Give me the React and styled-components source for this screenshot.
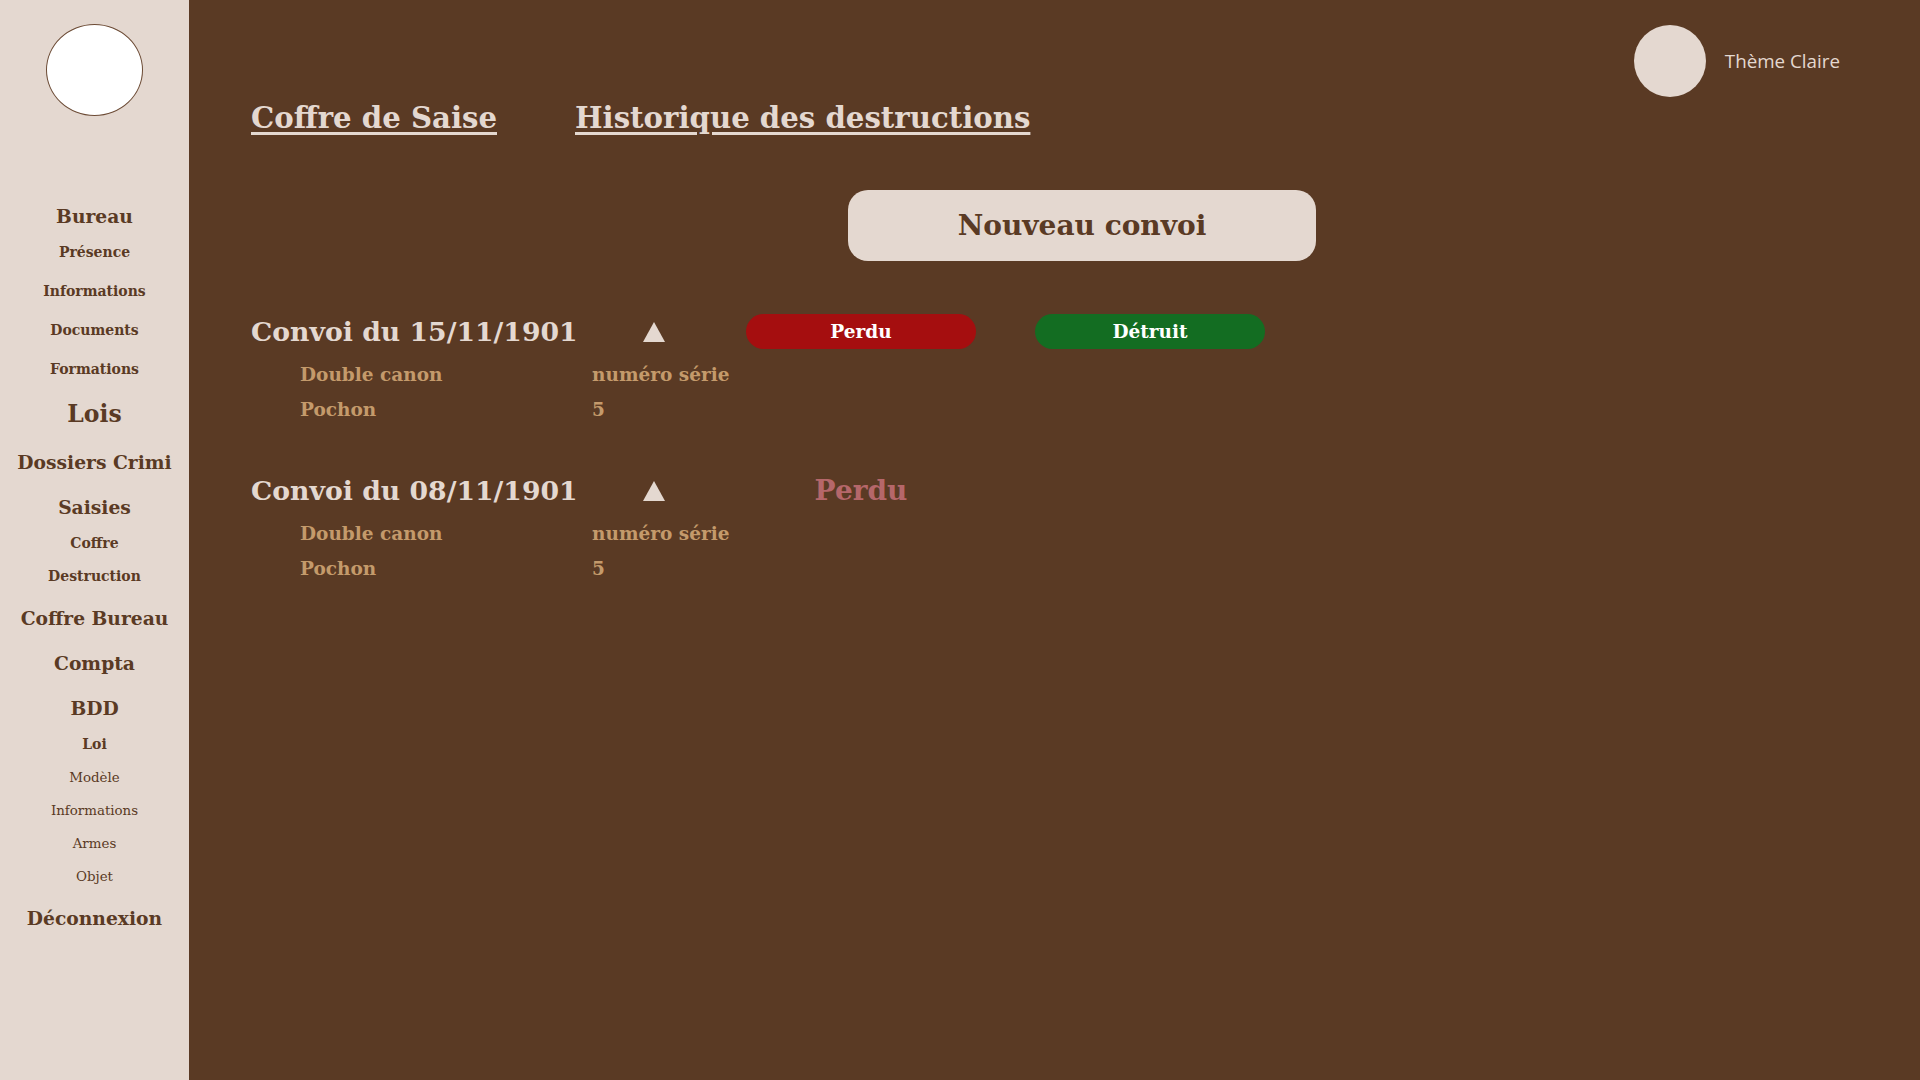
import React from "react";
import styled, { createGlobalStyle } from "styled-components";

const Global = createGlobalStyle`
  html, body {
    margin: 0;
    padding: 0;
    background: #5a3a24;
  }
  * {
    box-sizing: border-box;
  }
`;

const Page = styled.div`
  display: flex;
  width: 1920px;
  height: 1080px;
  overflow: hidden;
  font-family: "DejaVu Serif", "Liberation Serif", serif;
`;

const Sidebar = styled.nav`
  width: 189px;
  flex-shrink: 0;
  background: #e4d8d0;
  color: #5a3a24;
  display: flex;
  flex-direction: column;
  align-items: center;
  padding-top: 24px;
`;

const Logo = styled.div`
  width: 97px;
  height: 92px;
  border-radius: 50%;
  background: #ffffff;
  border: 1px solid #6b4a34;
  margin-bottom: 75px;
`;

const NavHeader = styled.div`
  font-weight: bold;
  font-size: ${(p) => (p.big ? "23.5px" : "18.7px")};
  line-height: ${(p) => (p.big ? "45px" : "39px")};
  height: ${(p) => (p.big ? "45px" : "39px")};
  margin-top: 6px;
  white-space: nowrap;
  text-align: center;
`;

const NavSub = styled.div`
  font-weight: ${(p) => (p.light ? "normal" : "bold")};
  font-size: ${(p) => (p.light ? "13.4px" : "14px")};
  line-height: 33px;
  height: 33px;
  margin-top: ${(p) => (p.spaced ? "6px" : "0")};
  white-space: nowrap;
  text-align: center;
`;

const Main = styled.main`
  flex: 1;
  display: flex;
  flex-direction: column;
  padding: 0 62px;
  color: #e4d8d0;
`;

const TopBar = styled.div`
  display: flex;
  justify-content: flex-end;
  align-items: center;
  gap: 19px;
  padding-top: 25px;
  padding-right: 18px;
`;

const ThemeDot = styled.div`
  width: 72px;
  height: 72px;
  border-radius: 50%;
  background: #e4d8d0;
`;

const ThemeLabel = styled.span`
  font-family: "Open Sans", "Noto Sans", sans-serif;
  font-size: 18.8px;
  color: #e4d8d0;
`;

const Tabs = styled.div`
  display: flex;
  gap: 78px;
  margin-top: 3px;
`;

const Tab = styled.a`
  font-size: 29.2px;
  font-weight: bold;
  line-height: 36px;
  color: #e4d8d0;
  text-decoration: underline;
  text-underline-offset: 4px;
  text-decoration-thickness: 2.5px;
`;

const NewButton = styled.button`
  align-self: flex-start;
  margin-left: 597px;
  margin-top: 54px;
  width: 468px;
  height: 71px;
  border: none;
  border-radius: 20px;
  background: #e4d8d0;
  color: #5a3a24;
  font-family: inherit;
  font-size: 28px;
  font-weight: bold;
`;

const ConvoyList = styled.div`
  display: flex;
  flex-direction: column;
  gap: 46px;
  margin-top: 53px;
`;

const Convoy = styled.section`
  display: flex;
  flex-direction: column;
`;

const ConvoyHead = styled.div`
  display: flex;
  align-items: center;
  height: 35px;
`;

const ConvoyTitle = styled.h2`
  margin: 0;
  width: 370px;
  flex-shrink: 0;
  font-size: 26.7px;
  font-weight: bold;
  white-space: nowrap;
  color: #e4d8d0;
`;

const Toggle = styled.div`
  width: 66px;
  display: flex;
  justify-content: center;
`;

const Status = styled.div`
  width: 230px;
  height: 35px;
  margin-left: 59px;
  display: flex;
  align-items: center;
  justify-content: center;
  border-radius: 18px;
  background: ${(p) => p.bg || "transparent"};
  color: ${(p) => p.color || "#ffffff"};
  font-size: ${(p) => (p.plain ? "28px" : "18.5px")};
  font-weight: bold;
`;

const Items = styled.div`
  display: grid;
  grid-template-columns: 292px auto;
  grid-auto-rows: 35px;
  align-items: center;
  padding-left: 49px;
  margin-top: 8px;
  color: #c49a6b;
  font-size: 18.5px;
  font-weight: bold;
`;

const Cell = styled.span`
  white-space: nowrap;
`;

function Triangle() {
  return (
    <svg width="22" height="20" viewBox="0 0 22 20">
      <polygon points="11,0 22,20 0,20" fill="#e4d8d0" />
    </svg>
  );
}

const convoys = [
  {
    date: "15/11/1901",
    items: [
      ["Double canon", "numéro série"],
      ["Pochon", "5"],
    ],
    actions: true,
  },
  {
    date: "08/11/1901",
    items: [
      ["Double canon", "numéro série"],
      ["Pochon", "5"],
    ],
    actions: false,
  },
];

export default function App() {
  return (
    <>
      <Global />
      <Page>
        <Sidebar>
          <Logo />
          <NavHeader>Bureau</NavHeader>
          <NavSub>Présence</NavSub>
          <NavSub spaced>Informations</NavSub>
          <NavSub spaced>Documents</NavSub>
          <NavSub spaced>Formations</NavSub>
          <NavHeader big>Lois</NavHeader>
          <NavHeader>Dossiers Crimi</NavHeader>
          <NavHeader>Saisies</NavHeader>
          <NavSub>Coffre</NavSub>
          <NavSub>Destruction</NavSub>
          <NavHeader>Coffre Bureau</NavHeader>
          <NavHeader>Compta</NavHeader>
          <NavHeader>BDD</NavHeader>
          <NavSub>Loi</NavSub>
          <NavSub light>Modèle</NavSub>
          <NavSub light>Informations</NavSub>
          <NavSub light>Armes</NavSub>
          <NavSub light>Objet</NavSub>
          <NavHeader>Déconnexion</NavHeader>
        </Sidebar>
        <Main>
          <TopBar>
            <ThemeDot />
            <ThemeLabel>Thème Claire</ThemeLabel>
          </TopBar>
          <Tabs>
            <Tab>Coffre de Saise</Tab>
            <Tab>Historique des destructions</Tab>
          </Tabs>
          <NewButton>Nouveau convoi</NewButton>
          <ConvoyList>
            {convoys.map((c) => (
              <Convoy key={c.date}>
                <ConvoyHead>
                  <ConvoyTitle>Convoi du {c.date}</ConvoyTitle>
                  <Toggle>
                    <Triangle />
                  </Toggle>
                  {c.actions ? (
                    <>
                      <Status bg="#a50e0f">Perdu</Status>
                      <Status bg="#136d22">Détruit</Status>
                    </>
                  ) : (
                    <Status plain color="#b5676a">
                      Perdu
                    </Status>
                  )}
                </ConvoyHead>
                <Items>
                  {c.items.map(([a, b]) => (
                    <React.Fragment key={a}>
                      <Cell>{a}</Cell>
                      <Cell>{b}</Cell>
                    </React.Fragment>
                  ))}
                </Items>
              </Convoy>
            ))}
          </ConvoyList>
        </Main>
      </Page>
    </>
  );
}
